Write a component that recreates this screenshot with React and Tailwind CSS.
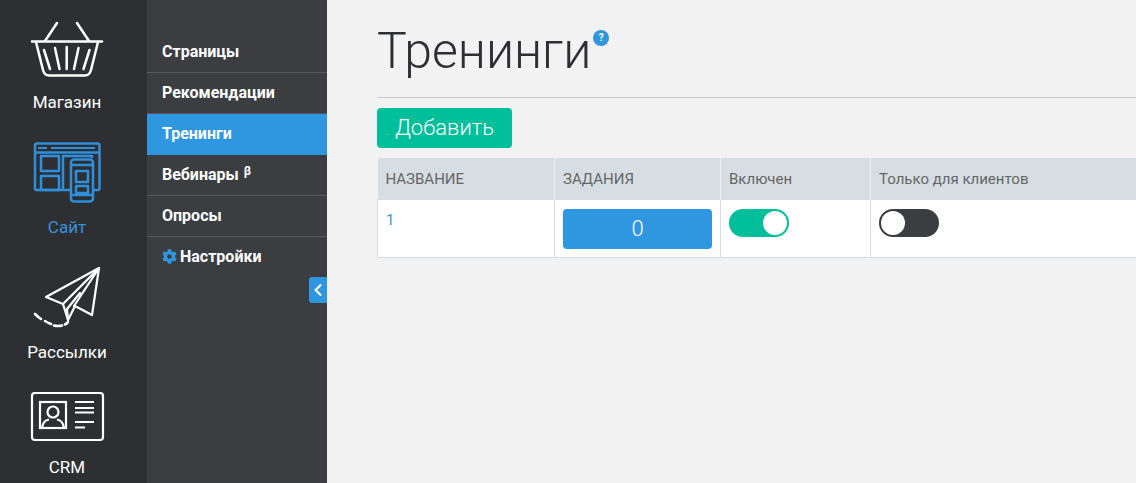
import { FaCog, FaChevronLeft } from "react-icons/fa";

const subNav = [
  { label: "Страницы" },
  { label: "Рекомендации" },
  { label: "Тренинги", active: true },
  { label: "Вебинары", beta: true },
  { label: "Опросы" },
];

function BasketIcon() {
  return (
    <svg viewBox="0 17 134 75" className="w-[134px] h-[75px]" fill="none" stroke="#fff" strokeWidth="2.5" strokeLinecap="round" strokeLinejoin="round">
      <path d="M32 41.5H102" />
      <path d="M57 23L45 41M77 23L89 41" />
      <path d="M36 42L43 70Q44.5 75.5 49 75.5H85Q89.5 75.5 91 70L98 42" />
      <path d="M44 50L50 69M55 48L59.5 69M66.7 47V69M78.5 48L74 69M89.5 50L83.5 69" />
    </svg>
  );
}

function SiteIcon() {
  return (
    <svg viewBox="0 142 134 75" className="w-[134px] h-[75px]" fill="none" stroke="#2f8fdb" strokeWidth="2.5" strokeLinejoin="round">
      <path d="M70 190H36.5Q35 190 35 188.5V145.5Q35 143.5 37 143.5H97.5Q99.5 143.5 99.5 145.5V188.5Q99.5 190 98 190H94" />
      <path d="M35 152.5H99.5" />
      <path d="M38 148H47M51 148H95" strokeWidth="2" />
      <rect x="41" y="156" width="18" height="15" />
      <rect x="41" y="176" width="18" height="14" />
      <path d="M63 190V156H92V158" />
      <rect x="71" y="159.5" width="22" height="42" rx="3" />
      <path d="M71 195H93M71 165H93" />
      <rect x="76" y="171" width="12" height="11" />
      <rect x="76" y="186" width="12" height="7" />
    </svg>
  );
}

function PlaneIcon() {
  return (
    <svg viewBox="0 267 134 75" className="w-[134px] h-[75px]" fill="none" stroke="#fff" strokeWidth="2.2" strokeLinejoin="round" strokeLinecap="round">
      <path d="M99 268L46 297L63 304L68 320L75 306L92 315Z" />
      <path d="M99 268L63 304M99 268L74 306M68 320L67 309L80 293" />
      <path d="M35 314Q38 317 41 319M45 321Q48 323 51 324M54 325.5Q58 326.5 62 325.5M65 324.5Q67 323.5 68 322" strokeWidth="2.6" />
    </svg>
  );
}

function CrmIcon() {
  return (
    <svg viewBox="0 392 134 65" className="w-[134px] h-[65px]" fill="none" stroke="#fff" strokeWidth="2.2">
      <rect x="32" y="393" width="71" height="47" rx="3" />
      <rect x="40" y="402" width="26" height="26" />
      <circle cx="53" cy="412" r="5.5" />
      <path d="M42 428Q43 420.5 49 419.5M64 428Q63 420.5 57 419.5" />
      <path d="M75 402H94M75 408H94M75 412.5H94M75 422H94M75 427.5H85" />
    </svg>
  );
}

function RailItem({ icon, label, active }) {
  return (
    <div className="h-[125px] w-[134px] pt-[17px] flex flex-col items-center">
      {icon}
      <div className={`h-5 leading-5 text-[17px] ${active ? "text-[#3a8fda]" : "text-white"}`}>{label}</div>
    </div>
  );
}

function Toggle({ on }) {
  return (
    <div
      className={`w-[60px] h-7 rounded-full border-2 flex items-center ${
        on ? "bg-[#00bf9a] border-[#00bf9a] justify-end" : "bg-[#3c3d41] border-[#3c3d41] justify-start"
      }`}
    >
      <div className="w-6 h-6 rounded-full bg-white" />
    </div>
  );
}

export default function App() {
  return (
    <div className="flex w-[1136px] h-[483px] overflow-hidden bg-[#f2f2f2] font-['Roboto',sans-serif]">
      {/* Левая колонка */}
      <div className="w-[147px] shrink-0 bg-[#2e2f33]">
        <RailItem icon={<BasketIcon />} label="Магазин" />
        <RailItem icon={<SiteIcon />} label="Сайт" active />
        <RailItem icon={<PlaneIcon />} label="Рассылки" />
        <RailItem icon={<CrmIcon />} label="CRM" />
      </div>

      {/* Подменю */}
      <div className="relative w-[180px] shrink-0 bg-[#3c3d41] pt-[32px]">
        {subNav.map((item) => (
          <div
            key={item.label}
            className={`h-[41px] pl-[15px] flex items-center text-base font-bold text-white border-b ${
              item.active ? "bg-[#2f96e0] border-[#2f96e0]" : "border-[#57585c]"
            }`}
          >
            {item.label}
            {item.beta && <span className="ml-[5px] mb-2 text-xs font-bold leading-none">β</span>}
          </div>
        ))}
        <div className="h-[39px] pl-[15px] flex items-center gap-[3px] text-base font-bold text-white">
          <FaCog className="text-[#2f96e0] w-[15px] h-[15px]" />
          Настройки
        </div>
        <div className="absolute right-0 top-[277px] w-[18px] h-[26px] bg-[#2f96e0] rounded-l-[3px] flex items-center justify-center">
          <FaChevronLeft className="text-white w-[12px] h-[14px]" />
        </div>
      </div>

      {/* Контент */}
      <div className="flex-1 min-w-0 pl-[50px]">
        <div className="h-[98px] border-b border-[#cccccc] pt-[21px] flex items-start">
          <h1 className="text-[50px] leading-[60px] font-light text-[#2e2f33]">Тренинги</h1>
          <div className="ml-[2px] mt-[9px] w-4 h-4 rounded-full bg-[#2f96e0] text-white text-[10px] font-bold leading-4 text-center">?</div>
        </div>
        <button className="mt-[10px] w-[135px] h-10 rounded bg-[#00bf9a] text-white text-[22px] font-light leading-10">Добавить</button>
        <table className="mt-[10px] w-[800px] table-fixed border-collapse text-[15px]">
          <thead>
            <tr className="h-[41px] bg-[#d6dee4] text-[#666666]">
              <th className="w-[177px] pl-[8px] pt-[2px] text-left font-normal border-r border-[#f2f2f2]">НАЗВАНИЕ</th>
              <th className="w-[166px] pl-[8px] pt-[2px] text-left font-normal border-r border-[#f2f2f2]">ЗАДАНИЯ</th>
              <th className="w-[150px] pl-[8px] pt-[2px] text-left font-normal border-r border-[#f2f2f2]">Включен</th>
              <th className="pl-[8px] pt-[2px] text-left font-normal">Только для клиентов</th>
            </tr>
          </thead>
          <tbody>
            <tr className="h-[58px] bg-white">
              <td className="pl-[8px] pt-[10px] align-top border border-[#d6dee4] text-[#3a8fda] leading-5">1</td>
              <td className="pl-[8px] pt-[9px] align-top border border-[#d6dee4]">
                <div className="w-[149px] h-10 rounded bg-[#2f96e0] text-white text-[22px] font-light leading-10 text-center">0</div>
              </td>
              <td className="pl-[8px] pt-[9px] align-top border border-[#d6dee4]">
                <Toggle on />
              </td>
              <td className="pl-[8px] pt-[9px] align-top border border-[#d6dee4]">
                <Toggle />
              </td>
            </tr>
          </tbody>
        </table>
      </div>
    </div>
  );
}
